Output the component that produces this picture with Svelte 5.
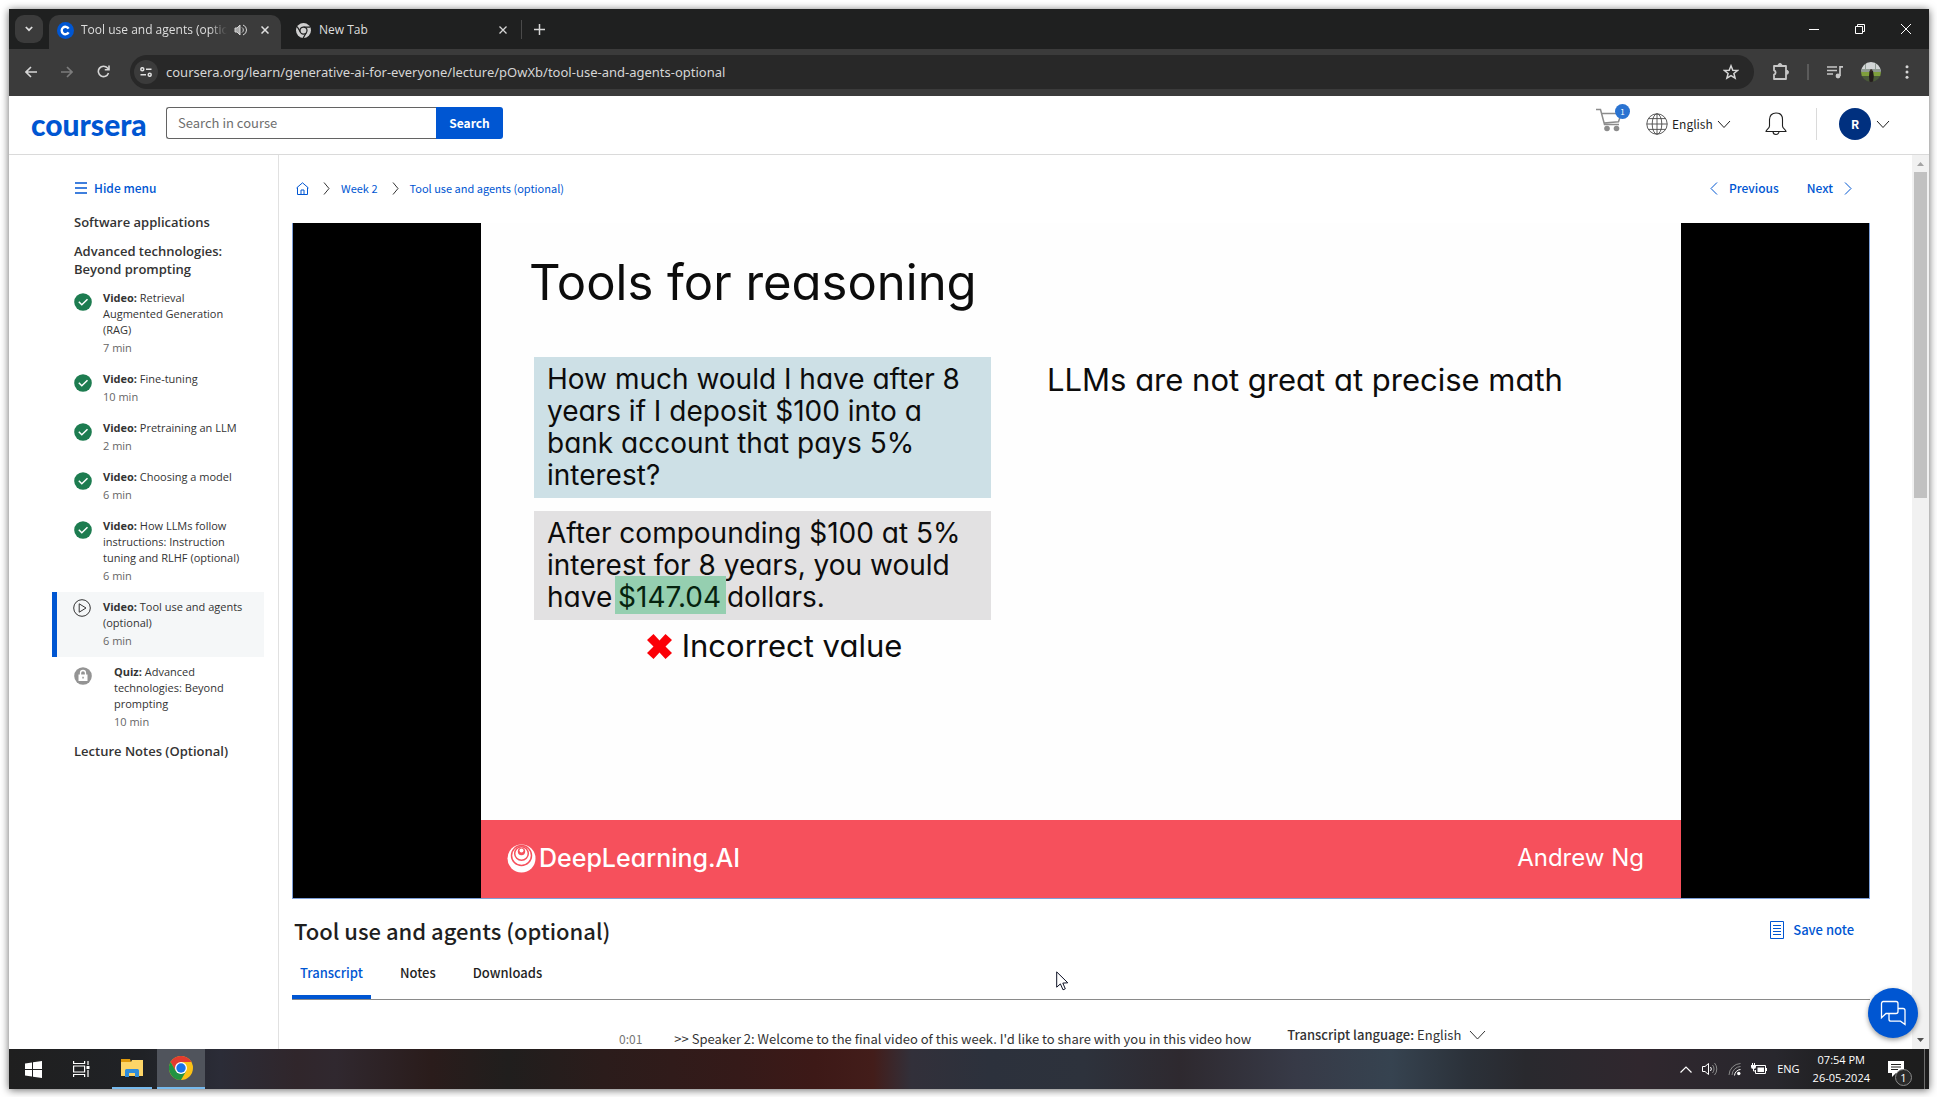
<script>
  const lessons = [
    { kind: 'Video', title: 'Retrieval Augmented Generation (RAG)', time: '7 min', state: 'done' },
    { kind: 'Video', title: 'Fine-tuning', time: '10 min', state: 'done' },
    { kind: 'Video', title: 'Pretraining an LLM', time: '2 min', state: 'done' },
    { kind: 'Video', title: 'Choosing a model', time: '6 min', state: 'done' },
    { kind: 'Video', title: 'How LLMs follow instructions: Instruction tuning and RLHF (optional)', time: '6 min', state: 'done' },
    { kind: 'Video', title: 'Tool use and agents (optional)', time: '6 min', state: 'current' },
    { kind: 'Quiz', title: 'Advanced technologies: Beyond prompting', time: '10 min', state: 'locked' }
  ];
  const tabs = ['Transcript', 'Notes', 'Downloads'];
  let activeTab = $state('Transcript');
  let url = $state('coursera.org/learn/generative-ai-for-everyone/lecture/pOwXb/tool-use-and-agents-optional');
</script>

{#snippet chevron(w, h, d)}
  <svg width={w} height={h} viewBox="0 0 {w} {h}" fill="none" stroke="currentColor" aria-hidden="true"><path {d} /></svg>
{/snippet}

{#snippet chromeLogo(size)}
  <svg width={size} height={size} viewBox="0 0 24 24" aria-hidden="true">
    <circle cx="12" cy="12" r="12" fill="#fbc116" />
    <path d="M1.6 6A12 12 0 0 1 22.4 6H12L6.8 15Z" fill="#e33b2e" />
    <path d="M1.6 6A12 12 0 0 0 12 24L17.2 15 12 18 6.8 15Z" fill="#229342" />
    <circle cx="12" cy="12" r="6" fill="#fff" />
    <circle cx="12" cy="12" r="4.7" fill="#1a73e8" />
  </svg>
{/snippet}

<div class="desktop">
  <div class="screen">
    <div class="tabstrip">
      <button class="tab-search" aria-label="Search tabs">
        <svg width="8" height="6" viewBox="0 0 8 6" fill="none" stroke="#dedede" stroke-width="1.700"><path d="M.8 1L4 4.200L7.200 1" /></svg>
      </button>
      <div class="browser-tab active">
        <svg width="17" height="17" viewBox="0 0 17 17" aria-hidden="true">
          <circle cx="8.5" cy="8.5" r="8.5" fill="#0056d2" />
          <path d="M11.6 6.6a3.7 3.7 0 1 0 0 3.8" fill="none" stroke="#fff" stroke-width="2.4" />
        </svg>
        <span class="tab-title fade">Tool use and agents (optional)</span>
        <svg width="13" height="12" viewBox="0 0 13 12" fill="none" stroke="#d6d6d6" aria-hidden="true">
          <path d="M1 4h2l3-3v10L3 8H1z" fill="#a8a8a8" /><path d="M8 3.5a3 3 0 0 1 0 5M9 1a5.3 5.3 0 0 1 0 10" />
        </svg>
        <button class="close" aria-label="Close tab">
          <svg width="8" height="8" viewBox="0 0 8 8" stroke="#e0e0e0" stroke-width="1.5"><path d="M.5 .5l7 7M7.5 .5l-7 7" /></svg>
        </button>
      </div>
      <div class="browser-tab">
        <svg width="15" height="15" viewBox="0 0 24 24" aria-hidden="true">
          <circle cx="12" cy="12" r="12" fill="#d0d0d0" />
          <path d="M12 6.5h10.5M7.2 14.7L2 6M16.8 14.7L11.5 24" stroke="#1f2020" stroke-width="2" />
          <circle cx="12" cy="12" r="5.6" fill="#d0d0d0" stroke="#1f2020" stroke-width="2" />
        </svg>
        <span class="tab-title">New Tab</span>
        <button class="close" aria-label="Close tab">
          <svg width="8" height="8" viewBox="0 0 8 8" stroke="#d6d6d6" stroke-width="1.3"><path d="M.5 .5l7 7M7.5 .5l-7 7" /></svg>
        </button>
      </div>
      <button class="new-tab" aria-label="New tab">
        <svg width="11" height="11" viewBox="0 0 11 11" stroke="#d6d6d6" stroke-width="1.5"><path d="M5.5 0v11M0 5.5h11" /></svg>
      </button>
      <div class="window-controls">
        <button aria-label="Minimize"><svg width="10" height="10" viewBox="0 0 10 10" stroke="#fff"><path d="M0 5.5h10" /></svg></button>
        <button aria-label="Restore"><svg width="10" height="10" viewBox="0 0 10 10" fill="none" stroke="#fff"><path d="M.5 2.500h7v7h-7zM2.500 2.500v-2h7v7h-2" /></svg></button>
        <button aria-label="Close"><svg width="10" height="10" viewBox="0 0 10 10" stroke="#fff"><path d="M0 0l10 10M10 0L0 10" /></svg></button>
      </div>
    </div>

    <div class="toolbar">
      <button aria-label="Back"><svg width="12" height="12" viewBox="0 0 12 12" fill="none" stroke="#d6d6d6" stroke-width="1.6"><path d="M12 6H1M6 1L1 6l5 5" /></svg></button>
      <button aria-label="Forward"><svg width="12" height="12" viewBox="0 0 12 12" fill="none" stroke="#7c7c7c" stroke-width="1.6"><path d="M0 6h11M6 1l5 5-5 5" /></svg></button>
      <button aria-label="Reload"><svg width="13" height="13" viewBox="0 0 13 13" fill="none" stroke="#d6d6d6" stroke-width="1.6"><path d="M11.500 8A5.200 5.200 0 1 1 10.500 3L12 4.500M12 .5v4.200H7.800" /></svg></button>
      <div class="omnibox">
        <button class="site-info" aria-label="Site information">
          <svg width="12" height="10" viewBox="0 0 12 10" fill="none" stroke="#e0e0e0" stroke-width="1.5"><circle cx="2.300" cy="2.200" r="1.500" /><path d="M6 2.200h5.500M.5 7.800H6" /><circle cx="9.700" cy="7.800" r="1.500" /></svg>
        </button>
        <input class="url" type="text" aria-label="Address" bind:value={url} />
        <button class="star" aria-label="Bookmark">
          <svg width="16" height="16" viewBox="0 0 16 16" fill="none" stroke="#d6d6d6" stroke-width="1.500"><path d="M8 1.800l1.800 4.400 4.700.3-3.600 3 1.200 4.600L8 11.600l-4.100 2.500 1.200-4.600-3.600-3 4.700-.3z" /></svg>
        </button>
      </div>
      <div class="tools">
        <button aria-label="Extensions"><svg width="17" height="17" viewBox="0 0 17 17" fill="none" stroke="#c7c7c7" stroke-width="1.800"><path d="M2 3h12v13H2v-4.300a2.300 2.300 0 0 0 0-4.400z" stroke-linejoin="round" /><path d="M6 2.500a2 2 0 0 1 4 0zM14.500 7.300a2 2 0 0 1 0 4z" fill="#c7c7c7" stroke-width="1" /></svg></button>
        <i class="bar"></i>
        <button aria-label="Media"><svg width="16" height="14" viewBox="0 0 16 14" fill="none" stroke="#c7c7c7" stroke-width="1.700"><path d="M0 2h10M0 5.500h10M0 9h6M13 11V1.900h3" /><circle cx="11" cy="11" r="2.400" fill="#c7c7c7" stroke="none" /></svg></button>
        <button aria-label="Profile">
          <svg width="20" height="20" viewBox="0 0 20 20"><defs><clipPath id="face"><circle cx="10" cy="10" r="10" /></clipPath></defs>
            <g clip-path="url(#face)"><path fill="#d2d5d6" d="M0 0h20v9H0z" /><path fill="#8f9a92" d="M0 7h20v3H0zM4 2h1v6H4zM14 1h1v7h-1z" /><path fill="#7fa03c" d="M0 10h20v4H0z" /><path fill="#4a5a3a" d="M0 14h20v6H0z" /><path fill="#241c1c" d="M8.500 9h3.500l.8 5-.8 6H8.500L8 14z" /><circle cx="10.200" cy="8.500" r="1.300" fill="#3a2a26" /></g>
          </svg>
        </button>
        <button aria-label="Menu"><svg width="4" height="14" viewBox="0 0 4 14" fill="#d6d6d6"><circle cx="2" cy="1.700" r="1.500" /><circle cx="2" cy="7" r="1.500" /><circle cx="2" cy="12.300" r="1.500" /></svg></button>
      </div>
    </div>

    <header class="site-header">
      <a class="logo" href="#home">coursera</a>
      <form class="search" onsubmit={(e) => e.preventDefault()}>
        <input type="text" placeholder="Search in course" aria-label="Search in course" />
        <button>Search</button>
      </form>
      <div class="account">
        <a class="cart" href="#cart" aria-label="Cart">
          <svg width="27" height="24" viewBox="0 0 27 24" fill="none" stroke="#8c8c8c" stroke-width="1.500"><path d="M0 1.500h4.500l4 15h14.500M6.200 5.500h19l-2.700 8.200L8 15" /><circle cx="11" cy="20.500" r="2.800" fill="#8c8c8c" stroke="none" /><circle cx="20.500" cy="20.500" r="2.800" fill="#8c8c8c" stroke="none" /></svg>
          <span class="cart-count">1</span>
        </a>
        <label class="language">
          <svg width="22" height="22" viewBox="0 0 22 22" fill="none" stroke="#4a4a4a" stroke-width=".9" aria-hidden="true"><circle cx="11" cy="11" r="10.200" /><ellipse cx="11" cy="11" rx="4.800" ry="10.200" /><path d="M11 .8v20.400M.8 11h20.400M2.300 5.600h17.400M2.300 16.400h17.400" /></svg>
          <select aria-label="Language"><option>English</option></select>
          {@render chevron(14, 9, 'M1 1L7 7.500L13 1')}
        </label>
        <button class="bell" aria-label="Notifications">
          <svg width="22" height="24" viewBox="0 0 22 24" fill="none" stroke="#1f1f1f" stroke-width="1.100"><path d="M1 19.500c0-2 3.500-3 3.500-5.500V7.500C4.500 3.500 7 1 11 1s6.500 2.500 6.500 6.500V14c0 2.500 3.500 3.500 3.500 5.500zM8 19.500a3 3 0 0 0 6 0" /></svg>
        </button>
        <button class="profile">
          <span class="avatar">R</span>
          {@render chevron(14, 9, 'M1 1L7 7.500L13 1')}
        </button>
      </div>
    </header>

    <div class="course">
      <nav class="sidebar" aria-label="Course outline">
        <button class="hide-menu">
          <svg width="12" height="12" viewBox="0 0 12 12" stroke="#0056d2" stroke-width="1.500" aria-hidden="true"><path d="M0 1h12M0 6h12M0 11h12" /></svg>
          Hide menu
        </button>
        <h2>Software applications</h2>
        <h2 class="open">Advanced technologies: Beyond prompting</h2>
        <ul>
          {#each lessons as lesson}
            <li>
              <a href="#lesson" class={['lesson', lesson.state]}>
                {#if lesson.state === 'done'}
                  <svg width="18" height="18" viewBox="0 0 18 18" aria-hidden="true"><circle cx="9" cy="9" r="8.800" fill="#1d7c50" /><path d="M4.800 8.800l3 3 5.700-5.600" fill="none" stroke="#fff" stroke-width="1.500" /></svg>
                {:else if lesson.state === 'current'}
                  <svg width="18" height="18" viewBox="0 0 18 18" fill="none" stroke="#333" aria-hidden="true"><circle cx="9" cy="9" r="8.300" /><path d="M6.200 4.800v8.400L13 9z" /></svg>
                {:else}
                  <svg width="18" height="18" viewBox="0 0 18 18" aria-hidden="true"><circle cx="9" cy="9" r="8.800" fill="#949494" /><path d="M4.500 7.500h9V14h-9z" fill="#fff" /><path d="M6.500 8V6a2.500 2.500 0 0 1 5 0v2" fill="none" stroke="#fff" stroke-width="1.300" /><path d="M8.300 9.800h1.500v1.700H8.300z" fill="#949494" /></svg>
                {/if}
                <span class="lesson-text">
                  <span class="lesson-title"><b>{lesson.kind}:</b> {lesson.title}</span>
                  <span class="lesson-time">{lesson.time}</span>
                </span>
              </a>
            </li>
          {/each}
        </ul>
        <h2 class="after">Lecture Notes (Optional)</h2>
      </nav>

      <main>
        <div class="crumbs">
          <nav class="trail" aria-label="Breadcrumb">
            <a href="#home" aria-label="Home"><svg width="13" height="13" viewBox="0 0 13 13" fill="none" stroke="#0056d2"><path d="M1.500 5.500v7h10v-7M.5 6l6-5.200L12.500 6M5 12.500v-4.500h3v4.500" /></svg></a>
            <span class="sep">{@render chevron(7, 13, 'M1 .5L6 6.500L1 12.500')}</span>
            <a href="#week">Week 2</a>
            <span class="sep">{@render chevron(7, 13, 'M1 .5L6 6.500L1 12.500')}</span>
            <a href="#lecture">Tool use and agents (optional)</a>
          </nav>
          <div class="pager">
            <a href="#prev">{@render chevron(8, 13, 'M7 .5L1 6.500L7 12.500')} Previous</a>
            <a href="#next">Next {@render chevron(8, 13, 'M1 .5L7 6.500L1 12.500')}</a>
          </div>
        </div>

        <section class="player" aria-label="Lecture video">
          <div class="slide">
            <h1>Tools for reasoning</h1>
            <div class="columns">
              <div class="left">
                <p class="ask">How much would I have after 8 years if I deposit $100 into a bank account that pays 5% interest?</p>
                <p class="answer">After compounding $100 at 5%<br />interest for 8 years, you would<br />have <mark>$147.04</mark> dollars.</p>
                <p class="verdict">
                  <svg width="25" height="25" viewBox="0 0 25 25" fill="#fb0007" aria-hidden="true"><path d="M6.500 0l6 6.500L18.500 0 25 6l-6.500 6.500L25 19l-6.500 6-6-6.500-6 6.500L0 19l6.500-6.500L0 6z" /></svg>
                  Incorrect value
                </p>
              </div>
              <p class="right">LLMs are not great at precise math</p>
            </div>
            <footer>
              <span class="brand">
                <svg width="29" height="29" viewBox="0 0 29 29" fill="none" aria-hidden="true"><circle cx="14.500" cy="14.500" r="14" fill="#fff" /><circle cx="14.500" cy="11.500" r="10" stroke="#f6505c" stroke-width="1.500" /><circle cx="14.500" cy="9.500" r="6.800" stroke="#f6505c" stroke-width="1.500" /><circle cx="14.500" cy="7.500" r="3.700" fill="#f6505c" /><circle cx="14.500" cy="6.500" r="2" fill="#fff" /></svg>
                DeepLearning.AI
              </span>
              <span class="speaker">Andrew Ng</span>
            </footer>
          </div>
        </section>

        <div class="title-row">
          <h1>Tool use and agents (optional)</h1>
          <button class="save">
            <svg width="14" height="18" viewBox="0 0 14 18" fill="none" stroke="#0056d2" aria-hidden="true"><path d="M.5 .5h13v17H.5zM3 4.500h8M3 7.500h8M3 10.500h8M3 13.500h8" /></svg>
            Save note
          </button>
        </div>

        <div class="tabs" role="tablist">
          {#each tabs as tab}
            <button role="tab" aria-selected={activeTab === tab} class:selected={activeTab === tab} onclick={() => (activeTab = tab)}>{tab}</button>
          {/each}
        </div>

        <div class="transcript">
          <div class="phrases">
            <span class="stamp">0:01</span>
            <p>&gt;&gt; Speaker 2: Welcome to the final video of this week. I'd like to share with you in this video how</p>
          </div>
          <label class="transcript-lang">
            <b>Transcript language:</b>
            <select><option>English</option></select>
            {@render chevron(17, 10, 'M1 1L8.500 9L16 1')}
          </label>
        </div>

        <svg class="pointer" width="13" height="20" viewBox="0 0 13 20" fill="#fff" stroke="#0c1024" aria-hidden="true"><path d="M.7 .9v15.300l3.700-3.300 2.600 5.900 2.300-1-2.500-5.700 5-.3z" /></svg>
      </main>

      <div class="scrollbar" aria-hidden="true">
        <svg width="7" height="4" viewBox="0 0 7 4" fill="#a3a3a3"><path d="M0 4L3.500 0 7 4z" /></svg>
        <i></i>
        <svg class="down" width="7" height="4" viewBox="0 0 7 4" fill="#505050"><path d="M0 0l3.500 4L7 0z" /></svg>
      </div>

      <button class="chat" aria-label="Chat">
        <svg width="26" height="26" viewBox="0 0 26 26" fill="none" stroke="#fff" stroke-width="1.300"><path d="M3 1.500h13a2 2 0 0 1 2 2v8a2 2 0 0 1-2 2H6l-4.500 4.200V3.500a2 2 0 0 1 1.500-2z" /><path d="M18 8.500h5a2 2 0 0 1 2 2v14l-4.500-3.300H11a2 2 0 0 1-2-2v-5.500" /></svg>
      </button>
    </div>

    <div class="taskbar">
      <button aria-label="Start"><svg width="17" height="17" viewBox="0 0 17 17" fill="#fff"><path d="M0 2.500l7-1v6.500H0zM8 1.300L17 0v8H8zM0 9h7v6.500l-7-1zM8 9h9v8l-9-1.300z" /></svg></button>
      <button aria-label="Task view"><svg width="17" height="16" viewBox="0 0 17 16" fill="none" stroke="#fff" stroke-width="1.200"><path d="M.6 0v2.500h11V0M.6 16v-2.500h11V16M.6 5h11v6H.6zM15 0v4M15 9v7" /><path d="M13.500 5h3v3h-3z" fill="#fff" stroke="none" /></svg></button>
      <button class="running" aria-label="File Explorer"><svg width="22" height="18" viewBox="0 0 22 18"><path d="M0 0h9l1 3H0z" fill="#e09a0c" /><path d="M0 3h10l1-2h11v16H0z" fill="#fdd567" /><path d="M4 18v-6.500a1.500 1.500 0 0 1 1.500-1.500h11a1.500 1.500 0 0 1 1.500 1.500V18h-4v-4H8v4z" fill="#2f8cdb" /></svg></button>
      <button class="running focused" aria-label="Chrome">{@render chromeLogo(24)}</button>
      <div class="tray">
        <svg width="12" height="7" viewBox="0 0 12 7" fill="none" stroke="#fff" stroke-width="1.200" aria-hidden="true"><path d="M.5 6.500L6 1l5.500 5.500" /></svg>
        <svg width="16" height="14" viewBox="0 0 16 14" fill="none" stroke="#fff" aria-hidden="true"><path d="M.5 4.500h2.500L6.500 1.500v11L3 9.500H.5z" /><path d="M8.500 5a3 3 0 0 1 0 4" /><path d="M10.500 3a6 6 0 0 1 0 8M12.500 1a9 9 0 0 1 0 12" stroke="#8a8a8a" /></svg>
        <svg width="13" height="14" viewBox="0 0 13 14" fill="none" aria-hidden="true"><path d="M1 13A12 12 0 0 1 12.500 1.500M4 13A9 9 0 0 1 12.500 4.500" stroke="#8a8a8a" /><path d="M6.500 13.500A6.500 6.500 0 0 1 12.500 7.500" stroke="#fff" /><circle cx="10.800" cy="11.500" r="1.700" fill="#fff" /></svg>
        <svg width="16" height="12" viewBox="0 0 16 12" fill="none" stroke="#fff" aria-hidden="true"><path d="M5 2.500h9.500v8H4.500V7M1.500 0v2.500M3.500 0v2.500M2.500 5v3h2" /><path d="M0 2h5v2a2.500 2 0 0 1-5 0zM6.500 4.500h6.500v4.500H6.500zM15 5h1v3h-1z" fill="#fff" stroke="none" /></svg>
        <span>ENG</span>
        <span class="clock">07:54 PM<br />26-05-2024</span>
        <button class="notice" aria-label="Notifications, 1 new">
          <svg width="16" height="16" viewBox="0 0 16 16" aria-hidden="true"><path d="M0 0h16v12H8l-4 4v-4H0z" fill="#fff" /><path d="M3 3.500h10M3 6h10M3 8.500h7" stroke="#1f1f1f" /></svg>
          <span class="notice-count">1</span>
        </button>
      </div>
    </div>
  </div>
</div>

<style>
  :global(body) { margin: 0; background: #fff; }
  * { box-sizing: border-box; }
  button, input, select { font: inherit; color: inherit; border: 0; padding: 0; background: none; border-radius: 0; }
  h1, h2, p, ul { margin: 0; padding: 0; font-weight: 400; }
  ul { list-style: none; }
  a { color: inherit; text-decoration: none; }
  svg { display: block; flex: none; }
  select { appearance: none; }

  .desktop { height: 100vh; padding: 9px 8px 8px 9px; overflow: hidden; }
  .screen {
    height: 100%; display: flex; flex-direction: column; background: #fff;
    box-shadow: 0 1px 8px rgba(0, 0, 0, .6);
    font-family: "Noto Sans CJK JP", "Noto Sans", sans-serif; color: #1f1f1f;
  }

  .tabstrip { flex: none; height: 40px; display: flex; align-items: center; background: #1f2020; color: #dedede; font: 12px/16px "Open Sans", sans-serif; padding-left: 6px; }
  .tab-search { width: 28px; height: 28px; border-radius: 9px; background: #3b3b3b; display: grid; place-items: center; margin-right: 6px; }
  .browser-tab { height: 34px; width: 236px; display: flex; align-items: center; align-self: flex-end; padding: 0 6px 4px 15px; gap: 8px; }
  .browser-tab.active { width: 232px; padding: 0 8px 4px 8px; gap: 7px; background: #3b3b3b; border-radius: 10px 10px 0 0; }
  .tab-title { flex: 1; min-width: 0; white-space: nowrap; overflow: hidden; }
  .fade { mask-image: linear-gradient(90deg, #000 88%, transparent); }
  .close { width: 16px; height: 16px; display: grid; place-items: center; }
  .active .close { margin-left: 3px; }
  .new-tab { margin-left: 4px; padding: 4px 12px; border-left: 1px solid #4a4a4a; }
  .window-controls { margin-left: auto; display: flex; height: 100%; }
  .window-controls button { width: 46px; display: grid; place-items: center; }

  .toolbar { flex: none; height: 47px; display: flex; align-items: center; gap: 24px; padding: 0 0 2px 16px; background: #3b3b3b; font: 13px/18px "Noto Sans", sans-serif; }
  .omnibox { flex: 1; height: 34px; margin-left: -4px; border-radius: 17px; background: #282828; display: flex; align-items: center; gap: 8px; padding: 0 15px 0 4px; color: #d6d6d6; }
  .site-info { width: 24px; height: 24px; border-radius: 50%; background: #3b3b3b; display: grid; place-items: center; }
  .url { flex: 1; min-width: 0; outline: 0; }
  .tools { display: flex; align-items: center; gap: 18px; padding: 0 20px 0 0; margin-left: -6px; }
  .tools .bar { width: 2px; height: 16px; background: #5b5b5b; }
  .tools button:last-child { margin-left: 6px; }

  .site-header { flex: none; height: 59px; display: flex; align-items: center; padding: 0 39px 2px 22px; border-bottom: 1px solid #dadada; }
  .logo { width: 135px; color: #0056d2; font: 900 30px/32px Lato, sans-serif; }
  .search { display: flex; height: 32px; font-size: 13px; line-height: 18px; margin-top: -2px; }
  .search input { width: 270px; border: 1px solid #636363; border-right: 0; border-radius: 3px 0 0 3px; padding: 0 11px; }
  .search input::placeholder { color: #6e6e6e; opacity: 1; }
  .search button { width: 67px; background: #0056d2; color: #fff; font-weight: 700; font-size: 12px; border-radius: 0 3px 3px 0; }
  .account { margin-left: auto; display: flex; align-items: center; color: #1f1f1f; }
  .cart { position: relative; margin-right: 23px; margin-top: -8px; }
  .cart-count { position: absolute; top: -4px; right: -7px; width: 15px; height: 15px; border-radius: 50%; background: #2a73d1; color: #fff; font-size: 8px; line-height: 15px; text-align: center; }
  .language { display: flex; align-items: center; gap: 4px; font-size: 12px; line-height: 20px; }
  .bell { margin: 0 29px 0 34px; }
  .profile { display: flex; align-items: center; gap: 5px; padding-left: 22px; border-left: 1px solid #dadada; }
  .avatar { width: 32px; height: 32px; border-radius: 50%; background: #00307f; color: #fff; font-size: 12px; font-weight: 700; line-height: 32px; }

  .course { flex: 1; min-height: 0; display: flex; overflow: hidden; position: relative; }
  .sidebar { flex: none; width: 270px; border-right: 1px solid #e1e1e1; padding: 23px 14px 0 43px; font-family: "Open Sans", sans-serif; }
  .hide-menu { display: flex; align-items: center; gap: 7px; margin: 0 0 15px 23px; color: #0056d2; font: 500 12px/20px "Noto Sans CJK JP", sans-serif; }
  h2 { margin: 0 0 11px 22px; font-size: 13px; line-height: 18px; font-weight: 600; color: #333; }
  h2.open { margin-bottom: 5px; }
  h2.after { margin-top: 4px; }
  .lesson { display: flex; gap: 11px; padding: 7px 24px 8px 22px; font-size: 11px; line-height: 16px; color: #333; }
  .lesson > svg { margin-top: 3px; }
  .lesson.current { background: #f5f7f8; border-left: 5px solid #0056d2; padding: 7px 14px 8px 16px; gap: 12px; }
  .lesson.current > svg { margin-top: 0; }
  .lesson.locked { gap: 22px; padding-right: 30px; }
  .lesson-title { display: block; }
  .lesson-title b { font-weight: 700; }
  .lesson-time { display: block; margin-top: 2px; color: #666; }

  main { flex: 1; min-width: 0; padding: 0 42px 0 13px; position: relative; }
  .crumbs { display: flex; justify-content: space-between; align-items: center; height: 68px; padding: 0 18px 2px 4px; font-size: 12px; line-height: 20px; color: #0056d2; }
  .trail { display: flex; align-items: center; font-size: 11px; }
  .sep { color: #333; margin: 0 11px 0 14px; }
  .pager { display: flex; gap: 28px; font-weight: 500; }
  .pager a { display: flex; align-items: center; gap: 11px; }

  .player { aspect-ratio: 1578 / 676; background: #000; border: solid #7d9fd8; border-width: 0 1px 1px; display: flex; justify-content: center; }
  .slide { width: 1200px; max-width: 77%; background: #fefefe; color: #0c0c0c; display: flex; flex-direction: column; font-family: Inter, sans-serif; font-feature-settings: "cv11"; }
  .slide h1 { font-size: 49px; line-height: 60px; padding: 30px 0 0 48px; }
  .columns { display: flex; gap: 56px; padding: 44px 53px 0; }
  .left { flex: none; width: 457px; font-size: 28px; line-height: 32px; }
  .ask { background: #cde0e6; padding: 6px 13px 7px; }
  .answer { background: #e2e1e2; margin-top: 13px; padding: 6px 13px 7px; white-space: nowrap; }
  .answer mark { background: #95cfb0; color: #06230f; padding: 4px 5px 0 3px; margin: 0 -7px 0 -5px; }
  .verdict { display: flex; justify-content: center; align-items: center; gap: 10px; font-size: 31px; line-height: 52px; padding-left: 24px; }
  .right { font-size: 31px; line-height: 46px; white-space: nowrap; }
  .slide footer { margin-top: auto; height: 78px; background: #f6505c; color: #fff; display: flex; justify-content: space-between; align-items: center; padding: 0 37px 2px 26px; font-size: 25px; line-height: 32px; }
  .brand { display: flex; align-items: center; gap: 3px; font-weight: 500; }
  .speaker { font-size: 24px; }

  .title-row { display: flex; justify-content: space-between; align-items: center; height: 64px; padding: 0 16px 2px 2px; }
  .title-row h1 { font-size: 22px; line-height: 32px; font-weight: 500; }
  .save { display: flex; align-items: center; gap: 9px; color: #0056d2; font-size: 13px; line-height: 20px; font-weight: 500; }
  .tabs { display: flex; gap: 21px; border-bottom: 1px solid #8a8a8a; font-size: 13px; line-height: 20px; font-weight: 500; }
  .tabs button { padding: 0 8px 12px; border-bottom: 4px solid transparent; }
  .tabs .selected { color: #0056d2; border-color: #0056d2; }
  .transcript { display: flex; padding: 25px 0 0 327px; font-size: 13px; line-height: 20px; color: #333; white-space: nowrap; }
  .phrases { display: flex; gap: 32px; margin-right: 36px; padding-top: 4px; }
  .stamp { font-size: 12px; color: #757575; }
  .transcript-lang { display: flex; align-items: center; gap: 3px; align-self: flex-start; }
  .transcript-lang b { font-weight: 500; }
  .transcript-lang svg { margin-left: 4px; }
  .pointer { position: absolute; left: 777px; top: 816px; }

  .scrollbar { flex: none; width: 17px; background: #f1f1f1; display: flex; flex-direction: column; align-items: center; padding: 7px 0; gap: 6px; }
  .scrollbar i { width: 13px; height: 37%; background: #c1c1c1; }
  .scrollbar .down { margin-top: auto; }
  .chat { position: absolute; right: 11px; bottom: 11px; width: 50px; height: 50px; border-radius: 50%; background: #0056d2; display: grid; place-items: center; box-shadow: 0 2px 5px rgba(0, 0, 0, .4); }

  .taskbar {
    flex: none; height: 40px; display: flex; color: #fff; font: 11px/18px "Open Sans", sans-serif;
    background: linear-gradient(90deg, #1f1f1f 0, #202226 7%, #2b2c37 11%, #30262b 15%, #30282f 17%, #2a1c1b 22%, #201e1d 26%, #2b1c1b 31%, #351a19 38%, #3d1917 42%, #431d1a 45%, #32303a 47%, #2c313c 51%, #2d323c 56%, #2e292f 61%, #373a47 67%, #364350 72%, #2b3139 76%, #29292e 79%, #30272e 85%, #28272d 92%, #1d1d1e 96%, #1d1d1d);
  }
  .taskbar > button { width: 48px; display: grid; place-items: center; }
  .taskbar > .running { width: 40px; margin: 0 5px 0 7px; border-bottom: 2px solid #76b9ed; }
  .taskbar > .focused { width: 48px; margin: 0; background: #50545c; }
  .tray { margin-left: auto; display: flex; align-items: center; gap: 10px; }
  .clock { text-align: center; margin: 0 8px 0 3px; }
  .notice { position: relative; align-self: stretch; padding: 0 20px 0 0; margin-right: 4px; border-right: 1px solid #6e6e6e; display: grid; align-items: center; }
  .notice-count { position: absolute; right: 12px; top: 20px; width: 17px; height: 17px; border-radius: 50%; background: #2a2a2a; border: 1px solid #8a8a8a; line-height: 15px; text-align: center; }
</style>
